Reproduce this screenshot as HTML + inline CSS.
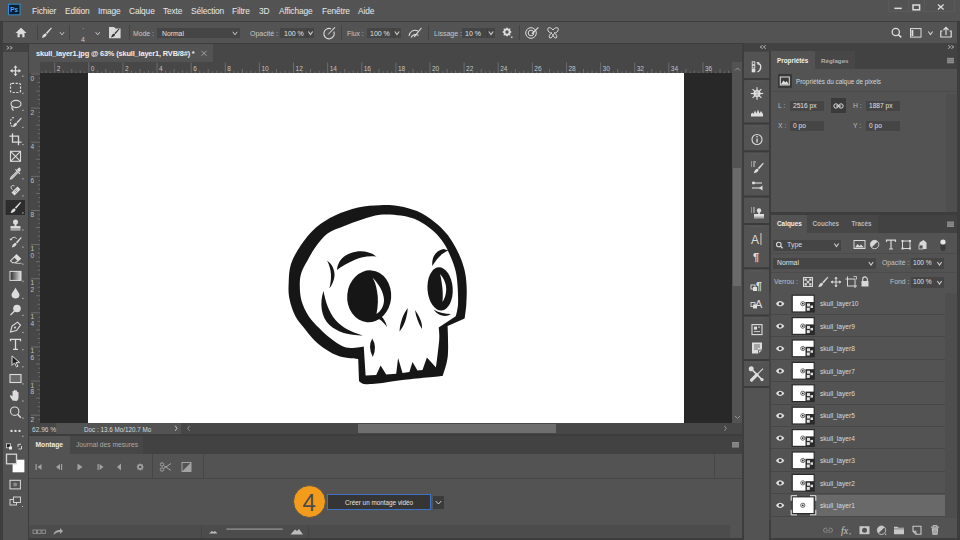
<!DOCTYPE html>
<html><head><meta charset="utf-8">
<style>
*{margin:0;padding:0;box-sizing:border-box}
html,body{width:960px;height:540px;overflow:hidden;background:#3d3d3d;font-family:"Liberation Sans",sans-serif;color:#d6d6d6}
.a{position:absolute}
.t{position:absolute;white-space:nowrap;font-size:8px;line-height:10px}
svg{position:absolute;left:0;top:0}
</style></head><body>
<div class="a" style="left:0px;top:0px;width:960px;height:21px;background:#535353;"></div>
<div class="a" style="left:3px;top:22px;width:954px;height:21px;background:#535353;"></div>
<div class="a" style="left:3px;top:44px;width:25px;height:8px;background:#424242;"></div>
<div class="a" style="left:3px;top:52px;width:25px;height:488px;background:#535353;"></div>
<div class="a" style="left:29px;top:44px;width:713px;height:18px;background:#474747;"></div>
<div class="a" style="left:29px;top:44px;width:184px;height:18px;background:#535353;"></div>
<div class="a" style="left:29px;top:62px;width:703px;height:11px;background:#474747;"></div>
<div class="a" style="left:29px;top:73px;width:11px;height:350px;background:#474747;"></div>
<div class="a" style="left:29px;top:62px;width:11px;height:11px;background:#535353;"></div>
<div class="a" style="left:40px;top:73px;width:692px;height:350px;background:#282828;"></div>
<div class="a" style="left:88px;top:73px;width:596px;height:350px;background:#ffffff;"></div>
<div class="a" style="left:732px;top:62px;width:10px;height:361px;background:#535353;"></div>
<div class="a" style="left:733px;top:168px;width:8px;height:118px;background:#6a6a6a;"></div>
<div class="a" style="left:29px;top:423px;width:713px;height:11px;background:#474747;"></div>
<div class="a" style="left:29px;top:423px;width:27px;height:11px;background:#474747;"></div>
<div class="a" style="left:56px;top:423px;width:125px;height:11px;background:#535353;"></div>
<div class="a" style="left:358px;top:424px;width:198px;height:9px;background:#6e6e6e;"></div>
<div class="a" style="left:29px;top:436px;width:713px;height:18px;background:#424242;"></div>
<div class="a" style="left:29px;top:436px;width:41px;height:18px;background:#535353;"></div>
<div class="a" style="left:70px;top:436px;width:73px;height:18px;background:#474747;"></div>
<div class="a" style="left:29px;top:454px;width:713px;height:84px;background:#535353;"></div>
<div class="a" style="left:744px;top:43px;width:213px;height:8px;background:#424242;"></div>
<div class="a" style="left:744px;top:51px;width:25px;height:489px;background:#4f4f4f;"></div>
<div class="a" style="left:771px;top:51px;width:186px;height:18px;background:#424242;"></div>
<div class="a" style="left:771px;top:51px;width:44px;height:18px;background:#535353;"></div>
<div class="a" style="left:815px;top:51px;width:40px;height:18px;background:#474747;"></div>
<div class="a" style="left:771px;top:69px;width:186px;height:143px;background:#535353;"></div>
<div class="a" style="left:771px;top:215px;width:186px;height:18px;background:#424242;"></div>
<div class="a" style="left:771px;top:215px;width:36px;height:18px;background:#535353;"></div>
<div class="a" style="left:807px;top:215px;width:38px;height:18px;background:#474747;"></div>
<div class="a" style="left:845px;top:215px;width:33px;height:18px;background:#474747;"></div>
<div class="a" style="left:771px;top:233px;width:186px;height:305px;background:#535353;"></div>
<div class="t" style="left:32px;top:6px;font-size:8.4px;color:#e8e8e8;letter-spacing:-0.15px">Fichier</div>
<div class="t" style="left:65px;top:6px;font-size:8.4px;color:#e8e8e8;letter-spacing:-0.15px">Edition</div>
<div class="t" style="left:98px;top:6px;font-size:8.4px;color:#e8e8e8;letter-spacing:-0.15px">Image</div>
<div class="t" style="left:129px;top:6px;font-size:8.4px;color:#e8e8e8;letter-spacing:-0.15px">Calque</div>
<div class="t" style="left:163px;top:6px;font-size:8.4px;color:#e8e8e8;letter-spacing:-0.15px">Texte</div>
<div class="t" style="left:191px;top:6px;font-size:8.4px;color:#e8e8e8;letter-spacing:-0.15px">Sélection</div>
<div class="t" style="left:232px;top:6px;font-size:8.4px;color:#e8e8e8;letter-spacing:-0.15px">Filtre</div>
<div class="t" style="left:259px;top:6px;font-size:8.4px;color:#e8e8e8;letter-spacing:-0.15px">3D</div>
<div class="t" style="left:279px;top:6px;font-size:8.4px;color:#e8e8e8;letter-spacing:-0.15px">Affichage</div>
<div class="t" style="left:322px;top:6px;font-size:8.4px;color:#e8e8e8;letter-spacing:-0.15px">Fenêtre</div>
<div class="t" style="left:358px;top:6px;font-size:8.4px;color:#e8e8e8;letter-spacing:-0.15px">Aide</div>
<div class="t" style="left:36px;top:48.7px;font-size:7.4px;color:#f0f0f0;font-weight:bold;letter-spacing:-0.15px">skull_layer1.jpg @ 63% (skull_layer1, RVB/8#) *</div>
<div class="a" style="left:37px;top:25px;width:1px;height:15px;background:#444444;"></div>
<div class="a" style="left:69px;top:25px;width:1px;height:15px;background:#444444;"></div>
<div class="a" style="left:128.5px;top:25px;width:1px;height:15px;background:#444444;"></div>
<div class="a" style="left:341px;top:25px;width:1px;height:15px;background:#444444;"></div>
<div class="a" style="left:428px;top:25px;width:1px;height:15px;background:#444444;"></div>
<div class="a" style="left:518.5px;top:25px;width:1px;height:15px;background:#444444;"></div>
<div class="t" style="left:133px;top:28.5px;font-size:6.8px;color:#c8c8c8;">Mode :</div>
<div class="a" style="left:157px;top:28px;width:83px;height:10px;background:#454545;"></div>
<div class="t" style="left:162px;top:28.5px;font-size:6.8px;color:#e0e0e0;">Normal</div>
<div class="t" style="left:250px;top:28.5px;font-size:7px;color:#c8c8c8;">Opacité :</div>
<div class="a" style="left:280px;top:28px;width:27px;height:10px;background:#454545;"></div>
<div class="a" style="left:307px;top:28px;width:7px;height:10px;background:#454545;"></div>
<div class="a" style="left:306.5px;top:28px;width:0.8px;height:10px;background:#3e3e3e;"></div>
<div class="t" style="left:284px;top:29px;font-size:7px;color:#e0e0e0;">100 %</div>
<div class="t" style="left:347px;top:28.5px;font-size:6.8px;color:#c8c8c8;">Flux :</div>
<div class="a" style="left:367px;top:28px;width:26px;height:10px;background:#454545;"></div>
<div class="a" style="left:393px;top:28px;width:8px;height:10px;background:#454545;"></div>
<div class="a" style="left:392.5px;top:28px;width:0.8px;height:10px;background:#3e3e3e;"></div>
<div class="t" style="left:370px;top:29px;font-size:7px;color:#e0e0e0;">100 %</div>
<div class="t" style="left:434px;top:28.5px;font-size:7px;color:#c8c8c8;">Lissage :</div>
<div class="a" style="left:462px;top:28px;width:25px;height:10px;background:#454545;"></div>
<div class="a" style="left:487px;top:28px;width:8px;height:10px;background:#454545;"></div>
<div class="a" style="left:486.5px;top:28px;width:0.8px;height:10px;background:#3e3e3e;"></div>
<div class="t" style="left:465px;top:29px;font-size:7px;color:#e0e0e0;">10 %</div>
<div class="t" style="left:82px;top:24px;font-size:7px;color:#c8c8c8;">·</div>
<div class="t" style="left:81px;top:35px;font-size:7px;color:#c8c8c8;">4</div>
<div class="a" style="left:888px;top:-1px;width:67px;height:13px;border:1px solid #5a5a5a"></div>
<div class="a" style="left:908px;top:0px;width:1px;height:12px;background:#5a5a5a;"></div>
<div class="a" style="left:924px;top:0px;width:1px;height:12px;background:#5a5a5a;"></div>
<div class="t" style="left:32px;top:425px;font-size:6.6px;color:#d0d0d0;">62.96 %</div>
<div class="t" style="left:84px;top:425px;font-size:6.3px;color:#d8d8d8;">Doc : 13.6 Mo/120.7 Mo</div>
<div class="t" style="left:35.5px;top:440px;font-size:6.7px;color:#eeeeee;font-weight:bold">Montage</div>
<div class="t" style="left:76px;top:440px;font-size:6.7px;color:#aaaaaa;">Journal des mesures</div>
<div class="a" style="left:29px;top:478px;width:713px;height:1px;background:#464646;"></div>
<div class="a" style="left:152px;top:454px;width:1px;height:24px;background:#464646;"></div>
<div class="a" style="left:203px;top:454px;width:1px;height:24px;background:#464646;"></div>
<div class="a" style="left:714px;top:454px;width:1px;height:24px;background:#464646;"></div>
<div class="a" style="left:29px;top:525px;width:701px;height:13px;background:#4c4c4c;"></div>
<div class="a" style="left:201px;top:525px;width:1px;height:13px;background:#444;"></div>
<div class="a" style="left:308px;top:525px;width:1px;height:13px;background:#444;"></div>
<div class="a" style="left:293px;top:484.5px;width:33px;height:33px;border-radius:50%;background:#f39c1c;border:1px solid #5e5547"></div>
<div class="t" style="left:302.5px;top:486.5px;font-size:24px;color:#4b4b4b;line-height:32px;font-weight:normal">4</div>
<div class="a" style="left:327px;top:494px;width:104px;height:16px;background:#353535;border:1px solid #3f72c4"></div>
<div class="t" style="left:345px;top:498px;font-size:6.35px;color:#e2e2e2;">Créer un montage vidéo</div>
<div class="a" style="left:433px;top:496px;width:11px;height:13px;background:#3b3b3b;"></div>
<div class="t" style="left:777px;top:56.3px;font-size:6.35px;color:#f0f0f0;font-weight:bold">Propriétés</div>
<div class="t" style="left:821px;top:56.3px;font-size:6.2px;color:#b0b0b0;font-weight:bold">Réglages</div>
<div class="a" style="left:771px;top:91px;width:186px;height:1px;background:#4a4a4a;"></div>
<div class="a" style="left:778px;top:74px;width:14px;height:14px;background:#393939;"></div>
<div class="t" style="left:796px;top:77px;font-size:6.35px;color:#d6d6d6;">Propriétés du calque de pixels</div>
<div class="a" style="left:946px;top:94px;width:11px;height:118px;background:#4e4e4e;"></div>
<div class="t" style="left:778px;top:101px;font-size:6.8px;color:#bbbbbb;">L :</div>
<div class="a" style="left:790px;top:101px;width:34px;height:10px;background:#454545;"></div>
<div class="t" style="left:793px;top:101px;font-size:6.6px;color:#e0e0e0;">2516 px</div>
<div class="a" style="left:831px;top:98px;width:15px;height:15px;background:#3a3a3a;"></div>
<div class="t" style="left:853px;top:101px;font-size:6.8px;color:#bbbbbb;">H :</div>
<div class="a" style="left:866px;top:101px;width:34px;height:10px;background:#454545;"></div>
<div class="t" style="left:869px;top:101px;font-size:6.6px;color:#e0e0e0;">1887 px</div>
<div class="t" style="left:778px;top:121px;font-size:6.8px;color:#bbbbbb;">X :</div>
<div class="a" style="left:790px;top:121px;width:34px;height:10px;background:#454545;"></div>
<div class="t" style="left:793px;top:121px;font-size:6.6px;color:#e0e0e0;">0 po</div>
<div class="t" style="left:853px;top:121px;font-size:6.8px;color:#bbbbbb;">Y :</div>
<div class="a" style="left:866px;top:121px;width:34px;height:10px;background:#454545;"></div>
<div class="t" style="left:869px;top:121px;font-size:6.6px;color:#e0e0e0;">0 po</div>
<div class="t" style="left:777px;top:219.4px;font-size:6.4px;color:#f0f0f0;font-weight:bold">Calques</div>
<div class="t" style="left:812.5px;top:219.4px;font-size:6.3px;color:#b8b8b8;font-weight:bold">Couches</div>
<div class="t" style="left:851.5px;top:219.4px;font-size:6.3px;color:#b8b8b8;font-weight:bold">Tracés</div>
<div class="a" style="left:773px;top:240px;width:68px;height:11px;background:#454545;"></div>
<div class="t" style="left:787px;top:240px;font-size:7px;color:#d8d8d8;">Type</div>
<div class="a" style="left:771px;top:253px;width:186px;height:1px;background:#4b4b4b;"></div>
<div class="a" style="left:773px;top:258px;width:103px;height:11px;background:#454545;"></div>
<div class="t" style="left:777px;top:258px;font-size:6.8px;color:#e0e0e0;">Normal</div>
<div class="t" style="left:882px;top:258px;font-size:6.8px;color:#c0c0c0;">Opacité :</div>
<div class="a" style="left:911px;top:258px;width:24px;height:11px;background:#454545;"></div>
<div class="a" style="left:935px;top:258px;width:9px;height:11px;background:#454545;"></div>
<div class="t" style="left:913px;top:258px;font-size:6.6px;color:#e0e0e0;">100 %</div>
<div class="a" style="left:771px;top:272px;width:186px;height:1px;background:#4b4b4b;"></div>
<div class="t" style="left:774px;top:277px;font-size:6.8px;color:#c0c0c0;">Verrou :</div>
<div class="t" style="left:890px;top:277px;font-size:6.8px;color:#c0c0c0;">Fond :</div>
<div class="a" style="left:911px;top:277px;width:24px;height:11px;background:#454545;"></div>
<div class="a" style="left:935px;top:277px;width:9px;height:11px;background:#454545;"></div>
<div class="t" style="left:913px;top:277px;font-size:6.6px;color:#e0e0e0;">100 %</div>
<div class="a" style="left:769px;top:292px;width:2px;height:228px;background:#444;"></div>
<div class="a" style="left:945px;top:293px;width:12px;height:225px;background:#4e4e4e;"></div>
<div class="a" style="left:771px;top:313.9px;width:174px;height:1px;background:#474747;"></div>
<div class="t" style="left:820px;top:299.3px;font-size:6.6px;color:#dadada;">skull_layer10</div>
<div class="a" style="left:771px;top:336.3px;width:174px;height:1px;background:#474747;"></div>
<div class="t" style="left:820px;top:321.7px;font-size:6.6px;color:#dadada;">skull_layer9</div>
<div class="a" style="left:771px;top:358.7px;width:174px;height:1px;background:#474747;"></div>
<div class="t" style="left:820px;top:344.1px;font-size:6.6px;color:#dadada;">skull_layer8</div>
<div class="a" style="left:771px;top:381.1px;width:174px;height:1px;background:#474747;"></div>
<div class="t" style="left:820px;top:366.5px;font-size:6.6px;color:#dadada;">skull_layer7</div>
<div class="a" style="left:771px;top:403.5px;width:174px;height:1px;background:#474747;"></div>
<div class="t" style="left:820px;top:388.9px;font-size:6.6px;color:#dadada;">skull_layer6</div>
<div class="a" style="left:771px;top:425.9px;width:174px;height:1px;background:#474747;"></div>
<div class="t" style="left:820px;top:411.3px;font-size:6.6px;color:#dadada;">skull_layer5</div>
<div class="a" style="left:771px;top:448.3px;width:174px;height:1px;background:#474747;"></div>
<div class="t" style="left:820px;top:433.7px;font-size:6.6px;color:#dadada;">skull_layer4</div>
<div class="a" style="left:771px;top:470.7px;width:174px;height:1px;background:#474747;"></div>
<div class="t" style="left:820px;top:456.1px;font-size:6.6px;color:#dadada;">skull_layer3</div>
<div class="a" style="left:771px;top:493.1px;width:174px;height:1px;background:#474747;"></div>
<div class="t" style="left:820px;top:478.5px;font-size:6.6px;color:#dadada;">skull_layer2</div>
<div class="a" style="left:816px;top:494.6px;width:129px;height:21.4px;background:#696969;"></div>
<div class="a" style="left:771px;top:515.5px;width:174px;height:1px;background:#474747;"></div>
<div class="t" style="left:820px;top:500.9px;font-size:6.6px;color:#dadada;">skull_layer1</div>
<svg width="960" height="540" style="left:0;top:0"><rect x="41.38" y="71.50" width="1" height="1.5" fill="#6c6c6c"/><rect x="45.65" y="70.50" width="1" height="2.5" fill="#6c6c6c"/><rect x="49.91" y="71.50" width="1" height="1.5" fill="#6c6c6c"/><rect x="54.18" y="62.50" width="1" height="10.5" fill="#6c6c6c"/><text x="56.68" y="70.5" font-size="6.5" fill="#c4c4c4" font-family="Liberation Sans">2</text><rect x="58.45" y="71.50" width="1" height="1.5" fill="#6c6c6c"/><rect x="62.71" y="70.50" width="1" height="2.5" fill="#6c6c6c"/><rect x="66.97" y="71.50" width="1" height="1.5" fill="#6c6c6c"/><rect x="71.24" y="69.00" width="1" height="4" fill="#6c6c6c"/><rect x="75.50" y="71.50" width="1" height="1.5" fill="#6c6c6c"/><rect x="79.77" y="70.50" width="1" height="2.5" fill="#6c6c6c"/><rect x="84.03" y="71.50" width="1" height="1.5" fill="#6c6c6c"/><rect x="88.30" y="62.50" width="1" height="10.5" fill="#6c6c6c"/><text x="90.80" y="70.5" font-size="6.5" fill="#c4c4c4" font-family="Liberation Sans">0</text><rect x="92.56" y="71.50" width="1" height="1.5" fill="#6c6c6c"/><rect x="96.83" y="70.50" width="1" height="2.5" fill="#6c6c6c"/><rect x="101.09" y="71.50" width="1" height="1.5" fill="#6c6c6c"/><rect x="105.36" y="69.00" width="1" height="4" fill="#6c6c6c"/><rect x="109.62" y="71.50" width="1" height="1.5" fill="#6c6c6c"/><rect x="113.89" y="70.50" width="1" height="2.5" fill="#6c6c6c"/><rect x="118.16" y="71.50" width="1" height="1.5" fill="#6c6c6c"/><rect x="122.42" y="62.50" width="1" height="10.5" fill="#6c6c6c"/><text x="124.92" y="70.5" font-size="6.5" fill="#c4c4c4" font-family="Liberation Sans">2</text><rect x="126.69" y="71.50" width="1" height="1.5" fill="#6c6c6c"/><rect x="130.95" y="70.50" width="1" height="2.5" fill="#6c6c6c"/><rect x="135.22" y="71.50" width="1" height="1.5" fill="#6c6c6c"/><rect x="139.48" y="69.00" width="1" height="4" fill="#6c6c6c"/><rect x="143.75" y="71.50" width="1" height="1.5" fill="#6c6c6c"/><rect x="148.01" y="70.50" width="1" height="2.5" fill="#6c6c6c"/><rect x="152.27" y="71.50" width="1" height="1.5" fill="#6c6c6c"/><rect x="156.54" y="62.50" width="1" height="10.5" fill="#6c6c6c"/><text x="159.04" y="70.5" font-size="6.5" fill="#c4c4c4" font-family="Liberation Sans">4</text><rect x="160.81" y="71.50" width="1" height="1.5" fill="#6c6c6c"/><rect x="165.07" y="70.50" width="1" height="2.5" fill="#6c6c6c"/><rect x="169.33" y="71.50" width="1" height="1.5" fill="#6c6c6c"/><rect x="173.60" y="69.00" width="1" height="4" fill="#6c6c6c"/><rect x="177.87" y="71.50" width="1" height="1.5" fill="#6c6c6c"/><rect x="182.13" y="70.50" width="1" height="2.5" fill="#6c6c6c"/><rect x="186.39" y="71.50" width="1" height="1.5" fill="#6c6c6c"/><rect x="190.66" y="62.50" width="1" height="10.5" fill="#6c6c6c"/><text x="193.16" y="70.5" font-size="6.5" fill="#c4c4c4" font-family="Liberation Sans">6</text><rect x="194.92" y="71.50" width="1" height="1.5" fill="#6c6c6c"/><rect x="199.19" y="70.50" width="1" height="2.5" fill="#6c6c6c"/><rect x="203.45" y="71.50" width="1" height="1.5" fill="#6c6c6c"/><rect x="207.72" y="69.00" width="1" height="4" fill="#6c6c6c"/><rect x="211.98" y="71.50" width="1" height="1.5" fill="#6c6c6c"/><rect x="216.25" y="70.50" width="1" height="2.5" fill="#6c6c6c"/><rect x="220.51" y="71.50" width="1" height="1.5" fill="#6c6c6c"/><rect x="224.78" y="62.50" width="1" height="10.5" fill="#6c6c6c"/><text x="227.28" y="70.5" font-size="6.5" fill="#c4c4c4" font-family="Liberation Sans">8</text><rect x="229.04" y="71.50" width="1" height="1.5" fill="#6c6c6c"/><rect x="233.31" y="70.50" width="1" height="2.5" fill="#6c6c6c"/><rect x="237.57" y="71.50" width="1" height="1.5" fill="#6c6c6c"/><rect x="241.84" y="69.00" width="1" height="4" fill="#6c6c6c"/><rect x="246.10" y="71.50" width="1" height="1.5" fill="#6c6c6c"/><rect x="250.37" y="70.50" width="1" height="2.5" fill="#6c6c6c"/><rect x="254.63" y="71.50" width="1" height="1.5" fill="#6c6c6c"/><rect x="258.90" y="62.50" width="1" height="10.5" fill="#6c6c6c"/><text x="261.40" y="70.5" font-size="6.5" fill="#c4c4c4" font-family="Liberation Sans">10</text><rect x="263.16" y="71.50" width="1" height="1.5" fill="#6c6c6c"/><rect x="267.43" y="70.50" width="1" height="2.5" fill="#6c6c6c"/><rect x="271.69" y="71.50" width="1" height="1.5" fill="#6c6c6c"/><rect x="275.96" y="69.00" width="1" height="4" fill="#6c6c6c"/><rect x="280.22" y="71.50" width="1" height="1.5" fill="#6c6c6c"/><rect x="284.49" y="70.50" width="1" height="2.5" fill="#6c6c6c"/><rect x="288.75" y="71.50" width="1" height="1.5" fill="#6c6c6c"/><rect x="293.02" y="62.50" width="1" height="10.5" fill="#6c6c6c"/><text x="295.52" y="70.5" font-size="6.5" fill="#c4c4c4" font-family="Liberation Sans">12</text><rect x="297.28" y="71.50" width="1" height="1.5" fill="#6c6c6c"/><rect x="301.55" y="70.50" width="1" height="2.5" fill="#6c6c6c"/><rect x="305.81" y="71.50" width="1" height="1.5" fill="#6c6c6c"/><rect x="310.08" y="69.00" width="1" height="4" fill="#6c6c6c"/><rect x="314.34" y="71.50" width="1" height="1.5" fill="#6c6c6c"/><rect x="318.61" y="70.50" width="1" height="2.5" fill="#6c6c6c"/><rect x="322.88" y="71.50" width="1" height="1.5" fill="#6c6c6c"/><rect x="327.14" y="62.50" width="1" height="10.5" fill="#6c6c6c"/><text x="329.64" y="70.5" font-size="6.5" fill="#c4c4c4" font-family="Liberation Sans">14</text><rect x="331.40" y="71.50" width="1" height="1.5" fill="#6c6c6c"/><rect x="335.67" y="70.50" width="1" height="2.5" fill="#6c6c6c"/><rect x="339.94" y="71.50" width="1" height="1.5" fill="#6c6c6c"/><rect x="344.20" y="69.00" width="1" height="4" fill="#6c6c6c"/><rect x="348.46" y="71.50" width="1" height="1.5" fill="#6c6c6c"/><rect x="352.73" y="70.50" width="1" height="2.5" fill="#6c6c6c"/><rect x="357.00" y="71.50" width="1" height="1.5" fill="#6c6c6c"/><rect x="361.26" y="62.50" width="1" height="10.5" fill="#6c6c6c"/><text x="363.76" y="70.5" font-size="6.5" fill="#c4c4c4" font-family="Liberation Sans">16</text><rect x="365.52" y="71.50" width="1" height="1.5" fill="#6c6c6c"/><rect x="369.79" y="70.50" width="1" height="2.5" fill="#6c6c6c"/><rect x="374.06" y="71.50" width="1" height="1.5" fill="#6c6c6c"/><rect x="378.32" y="69.00" width="1" height="4" fill="#6c6c6c"/><rect x="382.58" y="71.50" width="1" height="1.5" fill="#6c6c6c"/><rect x="386.85" y="70.50" width="1" height="2.5" fill="#6c6c6c"/><rect x="391.12" y="71.50" width="1" height="1.5" fill="#6c6c6c"/><rect x="395.38" y="62.50" width="1" height="10.5" fill="#6c6c6c"/><text x="397.88" y="70.5" font-size="6.5" fill="#c4c4c4" font-family="Liberation Sans">18</text><rect x="399.64" y="71.50" width="1" height="1.5" fill="#6c6c6c"/><rect x="403.91" y="70.50" width="1" height="2.5" fill="#6c6c6c"/><rect x="408.18" y="71.50" width="1" height="1.5" fill="#6c6c6c"/><rect x="412.44" y="69.00" width="1" height="4" fill="#6c6c6c"/><rect x="416.70" y="71.50" width="1" height="1.5" fill="#6c6c6c"/><rect x="420.97" y="70.50" width="1" height="2.5" fill="#6c6c6c"/><rect x="425.24" y="71.50" width="1" height="1.5" fill="#6c6c6c"/><rect x="429.50" y="62.50" width="1" height="10.5" fill="#6c6c6c"/><text x="432.00" y="70.5" font-size="6.5" fill="#c4c4c4" font-family="Liberation Sans">20</text><rect x="433.76" y="71.50" width="1" height="1.5" fill="#6c6c6c"/><rect x="438.03" y="70.50" width="1" height="2.5" fill="#6c6c6c"/><rect x="442.29" y="71.50" width="1" height="1.5" fill="#6c6c6c"/><rect x="446.56" y="69.00" width="1" height="4" fill="#6c6c6c"/><rect x="450.82" y="71.50" width="1" height="1.5" fill="#6c6c6c"/><rect x="455.09" y="70.50" width="1" height="2.5" fill="#6c6c6c"/><rect x="459.35" y="71.50" width="1" height="1.5" fill="#6c6c6c"/><rect x="463.62" y="62.50" width="1" height="10.5" fill="#6c6c6c"/><text x="466.12" y="70.5" font-size="6.5" fill="#c4c4c4" font-family="Liberation Sans">22</text><rect x="467.88" y="71.50" width="1" height="1.5" fill="#6c6c6c"/><rect x="472.15" y="70.50" width="1" height="2.5" fill="#6c6c6c"/><rect x="476.41" y="71.50" width="1" height="1.5" fill="#6c6c6c"/><rect x="480.68" y="69.00" width="1" height="4" fill="#6c6c6c"/><rect x="484.94" y="71.50" width="1" height="1.5" fill="#6c6c6c"/><rect x="489.21" y="70.50" width="1" height="2.5" fill="#6c6c6c"/><rect x="493.47" y="71.50" width="1" height="1.5" fill="#6c6c6c"/><rect x="497.74" y="62.50" width="1" height="10.5" fill="#6c6c6c"/><text x="500.24" y="70.5" font-size="6.5" fill="#c4c4c4" font-family="Liberation Sans">24</text><rect x="502.00" y="71.50" width="1" height="1.5" fill="#6c6c6c"/><rect x="506.27" y="70.50" width="1" height="2.5" fill="#6c6c6c"/><rect x="510.53" y="71.50" width="1" height="1.5" fill="#6c6c6c"/><rect x="514.80" y="69.00" width="1" height="4" fill="#6c6c6c"/><rect x="519.06" y="71.50" width="1" height="1.5" fill="#6c6c6c"/><rect x="523.33" y="70.50" width="1" height="2.5" fill="#6c6c6c"/><rect x="527.59" y="71.50" width="1" height="1.5" fill="#6c6c6c"/><rect x="531.86" y="62.50" width="1" height="10.5" fill="#6c6c6c"/><text x="534.36" y="70.5" font-size="6.5" fill="#c4c4c4" font-family="Liberation Sans">26</text><rect x="536.12" y="71.50" width="1" height="1.5" fill="#6c6c6c"/><rect x="540.39" y="70.50" width="1" height="2.5" fill="#6c6c6c"/><rect x="544.65" y="71.50" width="1" height="1.5" fill="#6c6c6c"/><rect x="548.92" y="69.00" width="1" height="4" fill="#6c6c6c"/><rect x="553.18" y="71.50" width="1" height="1.5" fill="#6c6c6c"/><rect x="557.45" y="70.50" width="1" height="2.5" fill="#6c6c6c"/><rect x="561.71" y="71.50" width="1" height="1.5" fill="#6c6c6c"/><rect x="565.98" y="62.50" width="1" height="10.5" fill="#6c6c6c"/><text x="568.48" y="70.5" font-size="6.5" fill="#c4c4c4" font-family="Liberation Sans">28</text><rect x="570.24" y="71.50" width="1" height="1.5" fill="#6c6c6c"/><rect x="574.51" y="70.50" width="1" height="2.5" fill="#6c6c6c"/><rect x="578.77" y="71.50" width="1" height="1.5" fill="#6c6c6c"/><rect x="583.04" y="69.00" width="1" height="4" fill="#6c6c6c"/><rect x="587.30" y="71.50" width="1" height="1.5" fill="#6c6c6c"/><rect x="591.57" y="70.50" width="1" height="2.5" fill="#6c6c6c"/><rect x="595.83" y="71.50" width="1" height="1.5" fill="#6c6c6c"/><rect x="600.10" y="62.50" width="1" height="10.5" fill="#6c6c6c"/><text x="602.60" y="70.5" font-size="6.5" fill="#c4c4c4" font-family="Liberation Sans">30</text><rect x="604.36" y="71.50" width="1" height="1.5" fill="#6c6c6c"/><rect x="608.63" y="70.50" width="1" height="2.5" fill="#6c6c6c"/><rect x="612.89" y="71.50" width="1" height="1.5" fill="#6c6c6c"/><rect x="617.16" y="69.00" width="1" height="4" fill="#6c6c6c"/><rect x="621.42" y="71.50" width="1" height="1.5" fill="#6c6c6c"/><rect x="625.69" y="70.50" width="1" height="2.5" fill="#6c6c6c"/><rect x="629.95" y="71.50" width="1" height="1.5" fill="#6c6c6c"/><rect x="634.22" y="62.50" width="1" height="10.5" fill="#6c6c6c"/><text x="636.72" y="70.5" font-size="6.5" fill="#c4c4c4" font-family="Liberation Sans">32</text><rect x="638.48" y="71.50" width="1" height="1.5" fill="#6c6c6c"/><rect x="642.75" y="70.50" width="1" height="2.5" fill="#6c6c6c"/><rect x="647.01" y="71.50" width="1" height="1.5" fill="#6c6c6c"/><rect x="651.28" y="69.00" width="1" height="4" fill="#6c6c6c"/><rect x="655.54" y="71.50" width="1" height="1.5" fill="#6c6c6c"/><rect x="659.81" y="70.50" width="1" height="2.5" fill="#6c6c6c"/><rect x="664.07" y="71.50" width="1" height="1.5" fill="#6c6c6c"/><rect x="668.34" y="62.50" width="1" height="10.5" fill="#6c6c6c"/><text x="670.84" y="70.5" font-size="6.5" fill="#c4c4c4" font-family="Liberation Sans">34</text><rect x="672.60" y="71.50" width="1" height="1.5" fill="#6c6c6c"/><rect x="676.87" y="70.50" width="1" height="2.5" fill="#6c6c6c"/><rect x="681.13" y="71.50" width="1" height="1.5" fill="#6c6c6c"/><rect x="685.40" y="69.00" width="1" height="4" fill="#6c6c6c"/><rect x="689.66" y="71.50" width="1" height="1.5" fill="#6c6c6c"/><rect x="693.93" y="70.50" width="1" height="2.5" fill="#6c6c6c"/><rect x="698.19" y="71.50" width="1" height="1.5" fill="#6c6c6c"/><rect x="702.46" y="62.50" width="1" height="10.5" fill="#6c6c6c"/><text x="704.96" y="70.5" font-size="6.5" fill="#c4c4c4" font-family="Liberation Sans">36</text><rect x="706.72" y="71.50" width="1" height="1.5" fill="#6c6c6c"/><rect x="710.99" y="70.50" width="1" height="2.5" fill="#6c6c6c"/><rect x="715.25" y="71.50" width="1" height="1.5" fill="#6c6c6c"/><rect x="719.52" y="69.00" width="1" height="4" fill="#6c6c6c"/><rect x="723.78" y="71.50" width="1" height="1.5" fill="#6c6c6c"/><rect x="728.05" y="70.50" width="1" height="2.5" fill="#6c6c6c"/><rect x="31.00" y="73.50" width="9" height="1" fill="#6c6c6c"/><text x="30.5" y="80.50" font-size="6.5" fill="#c0c0c0" font-family="Liberation Sans">0</text><rect x="38.50" y="77.77" width="1.5" height="1" fill="#6c6c6c"/><rect x="37.50" y="82.03" width="2.5" height="1" fill="#6c6c6c"/><rect x="38.50" y="86.30" width="1.5" height="1" fill="#6c6c6c"/><rect x="36.00" y="90.56" width="4" height="1" fill="#6c6c6c"/><rect x="38.50" y="94.83" width="1.5" height="1" fill="#6c6c6c"/><rect x="37.50" y="99.09" width="2.5" height="1" fill="#6c6c6c"/><rect x="38.50" y="103.35" width="1.5" height="1" fill="#6c6c6c"/><rect x="31.00" y="107.62" width="9" height="1" fill="#6c6c6c"/><text x="30.5" y="114.62" font-size="6.5" fill="#c0c0c0" font-family="Liberation Sans">2</text><rect x="38.50" y="111.88" width="1.5" height="1" fill="#6c6c6c"/><rect x="37.50" y="116.15" width="2.5" height="1" fill="#6c6c6c"/><rect x="38.50" y="120.41" width="1.5" height="1" fill="#6c6c6c"/><rect x="36.00" y="124.68" width="4" height="1" fill="#6c6c6c"/><rect x="38.50" y="128.94" width="1.5" height="1" fill="#6c6c6c"/><rect x="37.50" y="133.21" width="2.5" height="1" fill="#6c6c6c"/><rect x="38.50" y="137.47" width="1.5" height="1" fill="#6c6c6c"/><rect x="31.00" y="141.74" width="9" height="1" fill="#6c6c6c"/><text x="30.5" y="148.74" font-size="6.5" fill="#c0c0c0" font-family="Liberation Sans">4</text><rect x="38.50" y="146.00" width="1.5" height="1" fill="#6c6c6c"/><rect x="37.50" y="150.27" width="2.5" height="1" fill="#6c6c6c"/><rect x="38.50" y="154.53" width="1.5" height="1" fill="#6c6c6c"/><rect x="36.00" y="158.80" width="4" height="1" fill="#6c6c6c"/><rect x="38.50" y="163.06" width="1.5" height="1" fill="#6c6c6c"/><rect x="37.50" y="167.33" width="2.5" height="1" fill="#6c6c6c"/><rect x="38.50" y="171.59" width="1.5" height="1" fill="#6c6c6c"/><rect x="31.00" y="175.86" width="9" height="1" fill="#6c6c6c"/><text x="30.5" y="182.86" font-size="6.5" fill="#c0c0c0" font-family="Liberation Sans">6</text><rect x="38.50" y="180.12" width="1.5" height="1" fill="#6c6c6c"/><rect x="37.50" y="184.39" width="2.5" height="1" fill="#6c6c6c"/><rect x="38.50" y="188.65" width="1.5" height="1" fill="#6c6c6c"/><rect x="36.00" y="192.92" width="4" height="1" fill="#6c6c6c"/><rect x="38.50" y="197.19" width="1.5" height="1" fill="#6c6c6c"/><rect x="37.50" y="201.45" width="2.5" height="1" fill="#6c6c6c"/><rect x="38.50" y="205.72" width="1.5" height="1" fill="#6c6c6c"/><rect x="31.00" y="209.98" width="9" height="1" fill="#6c6c6c"/><text x="30.5" y="216.98" font-size="6.5" fill="#c0c0c0" font-family="Liberation Sans">8</text><rect x="38.50" y="214.24" width="1.5" height="1" fill="#6c6c6c"/><rect x="37.50" y="218.51" width="2.5" height="1" fill="#6c6c6c"/><rect x="38.50" y="222.77" width="1.5" height="1" fill="#6c6c6c"/><rect x="36.00" y="227.04" width="4" height="1" fill="#6c6c6c"/><rect x="38.50" y="231.30" width="1.5" height="1" fill="#6c6c6c"/><rect x="37.50" y="235.57" width="2.5" height="1" fill="#6c6c6c"/><rect x="38.50" y="239.83" width="1.5" height="1" fill="#6c6c6c"/><rect x="31.00" y="244.10" width="9" height="1" fill="#6c6c6c"/><text x="30.5" y="251.10" font-size="6.5" fill="#c0c0c0" font-family="Liberation Sans">1</text><text x="30.5" y="257.60" font-size="6.5" fill="#c0c0c0" font-family="Liberation Sans">0</text><rect x="38.50" y="248.36" width="1.5" height="1" fill="#6c6c6c"/><rect x="37.50" y="252.63" width="2.5" height="1" fill="#6c6c6c"/><rect x="38.50" y="256.89" width="1.5" height="1" fill="#6c6c6c"/><rect x="36.00" y="261.16" width="4" height="1" fill="#6c6c6c"/><rect x="38.50" y="265.42" width="1.5" height="1" fill="#6c6c6c"/><rect x="37.50" y="269.69" width="2.5" height="1" fill="#6c6c6c"/><rect x="38.50" y="273.95" width="1.5" height="1" fill="#6c6c6c"/><rect x="31.00" y="278.22" width="9" height="1" fill="#6c6c6c"/><text x="30.5" y="285.22" font-size="6.5" fill="#c0c0c0" font-family="Liberation Sans">1</text><text x="30.5" y="291.72" font-size="6.5" fill="#c0c0c0" font-family="Liberation Sans">2</text><rect x="38.50" y="282.49" width="1.5" height="1" fill="#6c6c6c"/><rect x="37.50" y="286.75" width="2.5" height="1" fill="#6c6c6c"/><rect x="38.50" y="291.01" width="1.5" height="1" fill="#6c6c6c"/><rect x="36.00" y="295.28" width="4" height="1" fill="#6c6c6c"/><rect x="38.50" y="299.54" width="1.5" height="1" fill="#6c6c6c"/><rect x="37.50" y="303.81" width="2.5" height="1" fill="#6c6c6c"/><rect x="38.50" y="308.07" width="1.5" height="1" fill="#6c6c6c"/><rect x="31.00" y="312.34" width="9" height="1" fill="#6c6c6c"/><text x="30.5" y="319.34" font-size="6.5" fill="#c0c0c0" font-family="Liberation Sans">1</text><text x="30.5" y="325.84" font-size="6.5" fill="#c0c0c0" font-family="Liberation Sans">4</text><rect x="38.50" y="316.61" width="1.5" height="1" fill="#6c6c6c"/><rect x="37.50" y="320.87" width="2.5" height="1" fill="#6c6c6c"/><rect x="38.50" y="325.13" width="1.5" height="1" fill="#6c6c6c"/><rect x="36.00" y="329.40" width="4" height="1" fill="#6c6c6c"/><rect x="38.50" y="333.66" width="1.5" height="1" fill="#6c6c6c"/><rect x="37.50" y="337.93" width="2.5" height="1" fill="#6c6c6c"/><rect x="38.50" y="342.19" width="1.5" height="1" fill="#6c6c6c"/><rect x="31.00" y="346.46" width="9" height="1" fill="#6c6c6c"/><text x="30.5" y="353.46" font-size="6.5" fill="#c0c0c0" font-family="Liberation Sans">1</text><text x="30.5" y="359.96" font-size="6.5" fill="#c0c0c0" font-family="Liberation Sans">6</text><rect x="38.50" y="350.72" width="1.5" height="1" fill="#6c6c6c"/><rect x="37.50" y="354.99" width="2.5" height="1" fill="#6c6c6c"/><rect x="38.50" y="359.25" width="1.5" height="1" fill="#6c6c6c"/><rect x="36.00" y="363.52" width="4" height="1" fill="#6c6c6c"/><rect x="38.50" y="367.78" width="1.5" height="1" fill="#6c6c6c"/><rect x="37.50" y="372.05" width="2.5" height="1" fill="#6c6c6c"/><rect x="38.50" y="376.31" width="1.5" height="1" fill="#6c6c6c"/><rect x="31.00" y="380.58" width="9" height="1" fill="#6c6c6c"/><text x="30.5" y="387.58" font-size="6.5" fill="#c0c0c0" font-family="Liberation Sans">1</text><text x="30.5" y="394.08" font-size="6.5" fill="#c0c0c0" font-family="Liberation Sans">8</text><rect x="38.50" y="384.84" width="1.5" height="1" fill="#6c6c6c"/><rect x="37.50" y="389.11" width="2.5" height="1" fill="#6c6c6c"/><rect x="38.50" y="393.38" width="1.5" height="1" fill="#6c6c6c"/><rect x="36.00" y="397.64" width="4" height="1" fill="#6c6c6c"/><rect x="38.50" y="401.90" width="1.5" height="1" fill="#6c6c6c"/><rect x="37.50" y="406.17" width="2.5" height="1" fill="#6c6c6c"/><rect x="38.50" y="410.44" width="1.5" height="1" fill="#6c6c6c"/><rect x="31.00" y="414.70" width="9" height="1" fill="#6c6c6c"/><text x="30.5" y="421.70" font-size="6.5" fill="#c0c0c0" font-family="Liberation Sans">2</text><rect x="38.50" y="418.96" width="1.5" height="1" fill="#6c6c6c"/></svg>
<svg width="960" height="540" style="left:0;top:0">
<path fill="#161616" d="M380.00,205.20 C386.63,204.93 391.63,204.92 397.80,205.90 C403.97,206.88 410.83,208.38 417.00,211.10 C423.17,213.82 429.62,218.12 434.80,222.20 C439.98,226.28 444.15,230.42 448.10,235.60 C452.05,240.78 455.78,247.63 458.50,253.30 C461.22,258.97 463.05,264.15 464.40,269.60 C465.75,275.05 466.28,280.20 466.60,286.00 C466.92,291.80 466.63,298.98 466.30,304.40 C465.97,309.82 464.60,318.50 464.60,318.50 L447.60,326.00 C447.60,326.00 448.63,347.67 447.80,356.00 C446.97,364.33 442.60,376.00 442.60,376.00 C442.60,376.00 413.35,378.73 402.50,380.00 C391.65,381.27 383.92,382.93 377.50,383.60 C371.08,384.27 367.08,384.43 364.00,384.00 C360.92,383.57 359.00,381.00 359.00,381.00 L358.20,359.00 C358.20,359.00 345.37,358.08 340.00,356.50 C334.63,354.92 330.23,352.17 326.00,349.50 C321.77,346.83 317.98,343.75 314.60,340.50 C311.22,337.25 308.90,334.03 305.70,330.00 C302.50,325.97 298.12,321.55 295.40,316.30 C292.68,311.05 290.52,304.18 289.40,298.50 C288.28,292.82 288.43,287.95 288.70,282.20 C288.97,276.45 288.95,270.20 291.00,264.00 C293.05,257.80 296.83,251.08 301.00,245.00 C305.17,238.92 310.33,232.42 316.00,227.50 C321.67,222.58 328.00,218.83 335.00,215.50 C342.00,212.17 350.50,209.22 358.00,207.50 C365.50,205.78 373.37,205.47 380.00,205.20 Z"/>
<path fill="#ffffff" d="M380.00,214.80 C386.45,214.15 394.28,214.62 400.70,215.60 C407.12,216.58 413.07,218.12 418.50,220.70 C423.93,223.28 429.10,227.38 433.30,231.10 C437.50,234.82 440.73,238.55 443.70,243.00 C446.67,247.45 449.12,253.12 451.10,257.80 C453.08,262.48 454.53,266.57 455.60,271.10 C456.67,275.63 457.10,279.45 457.50,285.00 C457.90,290.55 458.30,299.18 458.00,304.40 C457.70,309.62 455.70,316.30 455.70,316.30 L438.70,327.40 C438.70,327.40 439.65,333.32 439.20,340.00 C438.75,346.68 436.00,367.50 436.00,367.50 L426.90,357.50 L422.50,370.00 L417.50,370.50 L412.50,361.90 L409.40,372.00 L402.50,373.10 L398.10,358.10 L396.20,373.80 L386.20,374.40 L380.60,365.60 L376.20,375.00 L365.60,375.60 L363.75,346.50 C363.75,346.50 351.73,349.00 346.00,347.50 C340.27,346.00 333.88,340.73 329.40,337.50 C324.92,334.27 322.55,331.63 319.10,328.10 C315.65,324.57 311.67,320.98 308.70,316.30 C305.73,311.62 302.78,305.68 301.30,300.00 C299.82,294.32 299.68,287.03 299.80,282.20 C299.92,277.37 300.72,274.62 302.00,271.00 C303.28,267.38 305.25,264.50 307.50,260.50 C309.75,256.50 312.17,251.50 315.50,247.00 C318.83,242.50 322.70,237.00 327.50,233.50 C332.30,230.00 338.55,228.33 344.30,226.00 C350.05,223.67 356.05,221.37 362.00,219.50 C367.95,217.63 373.55,215.45 380.00,214.80 Z"/>
<g fill="#161616">
<ellipse cx="369.2" cy="296.3" rx="22" ry="26" transform="rotate(5 369.2 296.3)"/>
<path d="M381,316 C384,319 386,322.5 387,327 C384.5,323.5 382,321 379,319 Z"/>
<ellipse cx="440.1" cy="288.9" rx="12.6" ry="21.6" transform="rotate(-4 440.1 288.9)"/>
<path d="M337,270 C337.5,262 342.5,256 351,253 C360,250 369,251 376.5,256.5 C368.5,255.5 361,256.8 355,259.8 C347.5,263 341.5,266.5 337,270 Z"/>
<path d="M327,260.5 C332,264 335,270 334.5,276 C334,281 332,285 329.4,288.5 C331,282 331.5,276 330.5,270.5 C329.8,266.5 328.7,263.5 327,260.5 Z"/>
<path d="M323.5,291 C319.5,303 321,317 329.5,325 C337,332 349,335.5 363,335.5 C350,331.5 341.5,327 335.5,320 C329,312 325.5,302 323.5,291 Z"/>
<path d="M432.3,266 C431.5,257 435.5,251 443.5,249 L448.5,250.5 C441,253.5 437,258.5 432.3,266 Z"/>
<path d="M433.5,309.5 C439.5,313 445,314 451,314 C446,317.5 439,316.5 433.5,309.5 Z"/>
<path d="M407.8,308 C407,318 404,326 399.5,331.5 C400,323 403,314 407.8,308 Z"/>
<path d="M415,310 C419,316 422.5,322 422,329 C418.5,323.5 416,317 415,310 Z"/>
<path d="M372.2,338.5 Q377.5,347 372.8,357 Q367.5,347 372.2,338.5 Z"/>
</g>
<g fill="#ffffff">
<path d="M372.5,277.5 C378,283 384,292 384,300 C384,306 381,311 376.5,314 C378,306 378.5,298 377,291 C376,285 374.5,281 372.5,277.5 Z"/>
<path d="M440,274 C444,278.5 446.5,284 446.2,290 C446,295 444.5,299 442.5,302 C443,296 442.8,290 442,285 C441.5,281 441,277.5 440,274 Z"/>
</g>
</svg>
<svg width="960" height="540" style="left:0;top:0" fill="none" stroke="none"><rect x="8.5" y="4.2" width="11.5" height="10.6" fill="#0c1d2c" stroke="#2c8fd6" stroke-width="1"/><text x="10.2" y="12.3" font-size="6.3" font-weight="bold" fill="#4aa8f0" font-family="Liberation Sans">Ps</text><rect x="894.4" y="7.6" width="7.3" height="1.5" fill="#dcdcdc"/><rect x="913" y="5" width="6.6" height="4.8" stroke="#dcdcdc" stroke-width="1.5"/><path d="M938,4.5 L943.6,9.4 M943.6,4.5 L938,9.4" stroke="#dcdcdc" stroke-width="1.3"/><path d="M15.5,33 L21,27.7 L26.5,33 L24.5,33 L24.5,37.3 L22.3,37.3 L22.3,34.2 L19.7,34.2 L19.7,37.3 L17.5,37.3 L17.5,33 Z" fill="#dcdcdc"/><g transform="translate(46.6,32.7) scale(1.0)"><path d="M4.5,-5.2 L5.3,-4.5 L0.6,1.2 L-0.6,0.1 Z" fill="#dcdcdc"/><path d="M-1,0.6 L0.2,1.8 C-0.3,3.8 -2.3,5 -4.6,5.2 C-4.2,3.2 -3.2,1.2 -1,0.6 Z" fill="#dcdcdc"/></g><path d="M59.9,32.0 L62,35.0 L64.1,32.0" stroke="#bdbdbd" stroke-width="1.0"/><path d="M95.60000000000001,32.0 L97.7,35.0 L99.8,32.0" stroke="#bdbdbd" stroke-width="1.0"/><path d="M109,27 L114,27 L115.5,28.5 L120.6,28.5 L120.6,38.3 L109,38.3 Z" fill="#d8d8d8"/><g transform="translate(115,33) scale(0.85)"><path d="M4.5,-5.2 L5.3,-4.5 L0.6,1.2 L-0.6,0.1 Z" fill="#353535"/><path d="M-1,0.6 L0.2,1.8 C-0.3,3.8 -2.3,5 -4.6,5.2 C-4.2,3.2 -3.2,1.2 -1,0.6 Z" fill="#353535"/></g><path d="M232.8,31.799999999999997 L235,34.8 L237.2,31.799999999999997" stroke="#cfcfcf" stroke-width="1.0"/><path d="M308.3,31.5 L310.5,34.5 L312.7,31.5" stroke="#cfcfcf" stroke-width="1.1"/><path d="M394.8,31.5 L397,34.5 L399.2,31.5" stroke="#cfcfcf" stroke-width="1.1"/><path d="M488.8,31.5 L491,34.5 L493.2,31.5" stroke="#cfcfcf" stroke-width="1.1"/><path d="M331,28.8 A5.2,5.2 0 1 0 333.8,31.5" stroke="#dcdcdc" stroke-width="1.1"/><path d="M334.5,27 L328.5,33.5 L327.5,35 L329,34 L335.3,27.8 Z" fill="#dcdcdc"/><path d="M409,36 C410,31 414,29 418,31 M411,37.5 C413,34 416,34 418.5,35.5" stroke="#dcdcdc" stroke-width="1.1"/><path d="M421.2,27.5 L414.5,35.5 L413.5,37.5 L415.5,36.2 L421.8,28.3 Z" fill="#dcdcdc"/><polygon points="511.80,32.00 510.19,33.32 510.39,35.39 508.32,35.19 507.00,36.80 505.68,35.19 503.61,35.39 503.81,33.32 502.20,32.00 503.81,30.68 503.61,28.61 505.68,28.81 507.00,27.20 508.32,28.81 510.39,28.61 510.19,30.68" fill="#dcdcdc"/><circle cx="507" cy="32" r="1.68" fill="#535353"/><rect x="511" y="36.5" width="1.5" height="1.5" fill="#cfcfcf"/><circle cx="531" cy="33" r="5.3" stroke="#dcdcdc" stroke-width="1"/><circle cx="531" cy="33" r="2.8" stroke="#dcdcdc" stroke-width="1"/><path d="M538,27 L531.5,33.3 L532.6,34.3 L538.8,27.8 Z" fill="#dcdcdc"/><path d="M553,30 C551,27 547.5,27 547.8,29.5 C548,32 550,33 552,33 C549,34 548.5,37.5 550,38 C551.5,38.5 553,36 553,34 C553,36 554.5,38.5 556,38 C557.5,37.5 557,34 554,33 C556,33 558,32 558.3,29.5 C558.6,27 555,27 553,30 Z" stroke="#dcdcdc" stroke-width="1"/><circle cx="895.8" cy="32" r="3.6" stroke="#dcdcdc" stroke-width="1.3"/><path d="M898.4,34.6 L901.2,37.4" stroke="#dcdcdc" stroke-width="1.5"/><rect x="910.5" y="28.6" width="10.5" height="8.5" stroke="#dcdcdc" stroke-width="1"/><rect x="911.5" y="30" width="1.8" height="6" fill="#dcdcdc"/><path d="M928.3,31.5 L930.5,34.5 L932.7,31.5" stroke="#cfcfcf" stroke-width="1.1"/><path d="M942.5,31 L940.8,31 L940.8,37 L951.2,37 L951.2,31 L949.5,31" stroke="#dcdcdc" stroke-width="1.2"/><path d="M946,35 L946,27.5 M943.5,30 L946,27.3 L948.5,30" stroke="#dcdcdc" stroke-width="1.2"/><path d="M6.7,46.199999999999996 L9.1,47.8 L6.7,49.4" stroke="#b8b8b8" stroke-width="0.9"/><path d="M9.9,46.199999999999996 L12.299999999999999,47.8 L9.9,49.4" stroke="#b8b8b8" stroke-width="0.9"/><path d="M762.6,45.4 L760.1999999999999,47 L762.6,48.6" stroke="#b8b8b8" stroke-width="0.9"/><path d="M765.8000000000001,45.4 L763.4,47 L765.8000000000001,48.6" stroke="#b8b8b8" stroke-width="0.9"/><path d="M948.1999999999999,45.4 L950.6,47 L948.1999999999999,48.6" stroke="#b8b8b8" stroke-width="0.9"/><path d="M951.4,45.4 L953.8000000000001,47 L951.4,48.6" stroke="#b8b8b8" stroke-width="0.9"/><rect x="5.6" y="200" width="19.4" height="15" fill="#2d2d2d"/><rect x="22.3" y="75.6" width="1.2" height="1.2" fill="#bdbdbd"/><rect x="22.3" y="92.7" width="1.2" height="1.2" fill="#bdbdbd"/><rect x="22.3" y="109.8" width="1.2" height="1.2" fill="#bdbdbd"/><rect x="22.3" y="126.8" width="1.2" height="1.2" fill="#bdbdbd"/><rect x="22.3" y="144.0" width="1.2" height="1.2" fill="#bdbdbd"/><rect x="22.3" y="178.2" width="1.2" height="1.2" fill="#bdbdbd"/><rect x="22.3" y="195.3" width="1.2" height="1.2" fill="#bdbdbd"/><rect x="22.3" y="212.3" width="1.2" height="1.2" fill="#bdbdbd"/><rect x="22.3" y="229.4" width="1.2" height="1.2" fill="#bdbdbd"/><rect x="22.3" y="246.5" width="1.2" height="1.2" fill="#bdbdbd"/><rect x="22.3" y="263.6" width="1.2" height="1.2" fill="#bdbdbd"/><rect x="22.3" y="280.7" width="1.2" height="1.2" fill="#bdbdbd"/><rect x="22.3" y="297.8" width="1.2" height="1.2" fill="#bdbdbd"/><rect x="22.3" y="314.8" width="1.2" height="1.2" fill="#bdbdbd"/><rect x="22.3" y="331.9" width="1.2" height="1.2" fill="#bdbdbd"/><rect x="22.3" y="349.1" width="1.2" height="1.2" fill="#bdbdbd"/><rect x="22.3" y="366.2" width="1.2" height="1.2" fill="#bdbdbd"/><rect x="22.3" y="383.3" width="1.2" height="1.2" fill="#bdbdbd"/><rect x="22.3" y="400.4" width="1.2" height="1.2" fill="#bdbdbd"/><rect x="22.3" y="417.5" width="1.2" height="1.2" fill="#bdbdbd"/><rect x="22.3" y="435.7" width="1.2" height="1.2" fill="#bdbdbd"/><path d="M15.5,65.8 L15.5,75.8 M10.5,70.8 L20.5,70.8" stroke="#dcdcdc" stroke-width="1.2"/><path d="M13.5,67.8 L15.5,65.5 L17.5,67.8 Z M13.5,73.8 L15.5,76.1 L17.5,73.8 Z M12.5,68.8 L10.2,70.8 L12.5,72.8 Z M18.5,68.8 L20.8,70.8 L18.5,72.8 Z" fill="#dcdcdc"/><rect x="10.5" y="83.30000000000001" width="10" height="9.2" rx="1.5" stroke="#dcdcdc" stroke-width="1.2" stroke-dasharray="2.2 1.4"/><ellipse cx="16.0" cy="104" rx="5" ry="3.6" stroke="#dcdcdc" stroke-width="1.1"/><path d="M12.3,106.5 C11.0,108 12.5,109.5 13.5,110.5" stroke="#dcdcdc" stroke-width="1.1"/><path d="M14.0,117.5 C10.5,117.5 9.5,123 11.5,126 L14.5,126.5" stroke="#dcdcdc" stroke-width="1.1" stroke-dasharray="2 1.2"/><g transform="translate(17.0,122.2) scale(0.9)"><path d="M4.5,-5.2 L5.3,-4.5 L0.6,1.2 L-0.6,0.1 Z" fill="#dcdcdc"/><path d="M-1,0.6 L0.2,1.8 C-0.3,3.8 -2.3,5 -4.6,5.2 C-4.2,3.2 -3.2,1.2 -1,0.6 Z" fill="#dcdcdc"/></g><path d="M12.5,133.2 L12.5,142.2 L21.5,142.2 M9.5,136.2 L18.5,136.2 L18.5,145.2" stroke="#dcdcdc" stroke-width="1.3"/><rect x="10.5" y="151.3" width="10" height="10" stroke="#dcdcdc" stroke-width="1.1"/><path d="M10.5,151.3 L20.5,161.3 M20.5,151.3 L10.5,161.3" stroke="#dcdcdc" stroke-width="1.1"/><path d="M20.0,167.9 C21.5,169.4 20.5,170.9 19.0,171.9 L17.0,169.9 C18.0,168.4 19.0,166.9 20.0,167.9 Z" fill="#dcdcdc"/><path d="M18.0,172.4 L12.0,178.4 L10.5,178.9 L11.0,177.4 L17.0,171.4" stroke="#dcdcdc" stroke-width="1.1"/><path d="M15.5,169.4 L20.0,173.9" stroke="#dcdcdc" stroke-width="1.1"/><path d="M11.5,192.5 L17.5,186.5 L20.5,189.5 L14.5,195.5 Z" fill="#dcdcdc"/><path d="M12.5,189.5 C9.5,187.5 11.5,184.5 14.5,186.0" stroke="#dcdcdc" stroke-width="1"/><path d="M14.5,191.5 L16.5,189.5 M15.5,192.5 L17.5,190.5" stroke="#535353" stroke-width="0.6"/><g transform="translate(15.5,207.5) scale(1.05)"><path d="M4.5,-5.2 L5.3,-4.5 L0.6,1.2 L-0.6,0.1 Z" fill="#dcdcdc"/><path d="M-1,0.6 L0.2,1.8 C-0.3,3.8 -2.3,5 -4.6,5.2 C-4.2,3.2 -3.2,1.2 -1,0.6 Z" fill="#dcdcdc"/></g><circle cx="15.5" cy="222.1" r="2.5" fill="#dcdcdc"/><rect x="14.5" y="223.6" width="2" height="2.5" fill="#dcdcdc"/><path d="M10.5,226.1 L20.5,226.1 L20.5,228.6 L10.5,228.6 Z" fill="#dcdcdc"/><rect x="10.5" y="229.4" width="10" height="1" fill="#dcdcdc"/><g transform="translate(16.5,242.2) scale(1.0)"><path d="M4.5,-5.2 L5.3,-4.5 L0.6,1.2 L-0.6,0.1 Z" fill="#dcdcdc"/><path d="M-1,0.6 L0.2,1.8 C-0.3,3.8 -2.3,5 -4.6,5.2 C-4.2,3.2 -3.2,1.2 -1,0.6 Z" fill="#dcdcdc"/></g><path d="M10.5,239.7 C12.5,236.7 15.5,236.7 16.5,238.7" stroke="#dcdcdc" stroke-width="1"/><path d="M9.5,238.7 L11.0,240.7 L12.5,238.7" fill="#dcdcdc"/><path d="M10.5,260.8 L16.5,254.8 L20.5,258.8 L15.5,262.8 L12.5,262.8 Z" stroke="#dcdcdc" stroke-width="1.1"/><path d="M14.0,257.3 L18.0,261.3 L20.5,258.8 L16.5,254.8 Z" fill="#dcdcdc"/><path d="M15.5,263.3 L21.5,263.3" stroke="#dcdcdc" stroke-width="0.8"/><defs><linearGradient id="gr" x1="0" x2="1"><stop offset="0" stop-color="#2a2a2a"/><stop offset="1" stop-color="#e0e0e0"/></linearGradient></defs><rect x="10.0" y="271.4" width="11" height="9" fill="url(#gr)" stroke="#dcdcdc" stroke-width="1"/><path d="M15.5,287.5 C16.5,290 19.5,293 19.5,295 C19.5,297.5 17.5,298.5 15.5,298.5 C13.5,298.5 11.5,297.5 11.5,295 C11.5,293 14.5,290 15.5,287.5 Z" fill="#dcdcdc"/><circle cx="17.0" cy="308.5" r="3.8" fill="#dcdcdc"/><path d="M14.5,311 L10.5,315" stroke="#dcdcdc" stroke-width="1.3"/><path d="M10.5,332.1 L12.0,326.1 L17.5,322.1 L20.5,325.1 L16.5,330.6 Z" stroke="#dcdcdc" stroke-width="1.1"/><circle cx="15.0" cy="327.6" r="1" fill="#dcdcdc"/><path d="M10.5,341.3 L10.5,339.3 L20.5,339.3 L20.5,341.3 M15.5,339.3 L15.5,349.3 M13.0,349.3 L18.0,349.3" stroke="#dcdcdc" stroke-width="1.3"/><path d="M12.0,355.9 L12.0,365.4 L14.5,362.9 L16.5,366.9 L18.0,366.2 L16.0,362.4 L19.5,362.4 Z" fill="#1e1e1e" stroke="#dcdcdc" stroke-width="1"/><rect x="10.0" y="374.5" width="11" height="8" fill="#6a6a6a" stroke="#dcdcdc" stroke-width="1.1"/><path d="M12.5,400.6 C11.5,398.6 9.5,396.6 10.0,395.6 C10.5,394.6 12.0,395.6 12.5,396.6 L12.5,391.6 C12.5,390.6 14.0,390.6 14.0,391.6 L14.0,390.6 C14.0,389.6 15.5,389.6 15.5,390.6 L15.5,391.1 C15.5,390.1 17.0,390.1 17.0,391.1 L17.0,392.6 C17.0,391.6 18.5,391.6 18.5,392.6 L18.5,397.6 C18.5,399.6 17.5,400.6 16.5,401.1 Z" fill="#dcdcdc"/><circle cx="14.7" cy="411.2" r="4.2" stroke="#dcdcdc" stroke-width="1.1"/><path d="M17.7,414.2 L20.8,417.7" stroke="#dcdcdc" stroke-width="1.5"/><circle cx="11.5" cy="430.9" r="1.2" fill="#dcdcdc"/><circle cx="15.5" cy="430.9" r="1.2" fill="#dcdcdc"/><circle cx="19.5" cy="430.9" r="1.2" fill="#dcdcdc"/><rect x="6.5" y="443.8" width="4" height="4" fill="#1a1a1a" stroke="#dcdcdc" stroke-width="0.8"/><rect x="9" y="446.5" width="3" height="3" fill="#eeeeee"/><path d="M18,447 L18,444.3 L21,444.3 M21.5,446 L21.5,449 L18.5,449" stroke="#dcdcdc" stroke-width="0.9"/><rect x="12.6" y="459.7" width="11.8" height="12.6" fill="#ffffff"/><rect x="6.5" y="454.2" width="10" height="9.6" fill="#535353" stroke="#d4d4d4" stroke-width="1.3"/><rect x="10" y="480.3" width="10.4" height="8.6" stroke="#dcdcdc" stroke-width="1"/><circle cx="15.2" cy="484.6" r="2" fill="#8a8a8a"/><rect x="10" y="499.5" width="6.5" height="5.5" stroke="#dcdcdc" stroke-width="0.9"/><rect x="13.5" y="497" width="7" height="5.5" fill="#535353" stroke="#dcdcdc" stroke-width="0.9"/><rect x="22" y="506" width="1" height="1" fill="#bdbdbd"/><path d="M175.2,425.8 L177,428.3 L175.2,430.8" stroke="#cfcfcf" stroke-width="0.9"/><path d="M189.5,425.8 L187.7,428.3 L189.5,430.8" stroke="#9a9a9a" stroke-width="0.9"/><path d="M735,70.5 L737.5,68 L740,70.5" stroke="#9a9a9a" stroke-width="0.9"/><path d="M735,416 L737.5,418.5 L740,416" stroke="#9a9a9a" stroke-width="0.9"/><path d="M724.5,425.8 L726.3,428.3 L724.5,430.8" stroke="#9a9a9a" stroke-width="0.9"/><rect x="35.5" y="464" width="1.2" height="6" fill="#a2a2a2"/><path d="M41.5,464 L37.5,467 L41.5,470 Z" fill="#a2a2a2"/><path d="M60,464 L56,467 L60,470 Z" fill="#a2a2a2"/><rect x="61" y="464" width="1.2" height="6" fill="#a2a2a2"/><path d="M77.5,463.5 L82.5,467 L77.5,470.5 Z" fill="#a2a2a2"/><rect x="97.5" y="464" width="1.2" height="6" fill="#a2a2a2"/><path d="M99.5,464 L103.5,467 L99.5,470 Z" fill="#a2a2a2"/><path d="M121,463.5 L117,467 L121,470.5 Z" fill="#a2a2a2"/><polygon points="144.00,467.00 142.73,468.05 142.89,469.69 141.25,469.53 140.20,470.80 139.15,469.53 137.51,469.69 137.67,468.05 136.40,467.00 137.67,465.95 137.51,464.31 139.15,464.47 140.20,463.20 141.25,464.47 142.89,464.31 142.73,465.95" fill="#a2a2a2"/><circle cx="140.2" cy="467" r="1.33" fill="#535353"/><circle cx="162" cy="469.5" r="1.7" stroke="#a2a2a2" stroke-width="1"/><circle cx="162" cy="464.5" r="1.7" stroke="#a2a2a2" stroke-width="1"/><path d="M163.5,468.5 L171,463.5 M163.5,465.5 L171,470.5" stroke="#a2a2a2" stroke-width="1"/><rect x="182" y="462.5" width="9" height="9" stroke="#a2a2a2" stroke-width="1"/><path d="M182,471.5 L191,462.5 L191,471.5 Z" fill="#a2a2a2"/><rect x="33" y="530" width="3.5" height="3.5" stroke="#9a9a9a" stroke-width="0.8"/><rect x="37.5" y="530" width="3.5" height="3.5" stroke="#9a9a9a" stroke-width="0.8"/><rect x="42" y="530" width="3.5" height="3.5" stroke="#9a9a9a" stroke-width="0.8"/><path d="M53.5,535 C54,531 57,530 60,530 L60,528 L63,531 L60,534 L60,532 C57.5,532 55.5,533 53.5,535 Z" fill="#a8a8a8"/><path d="M209,533.5 L212,531 L213.5,532 L215,531 L217.5,533.5 Z" fill="#bdbdbd"/><rect x="226.4" y="528.5" width="56.3" height="1.2" fill="#9a9a9a"/><path d="M290.5,534.5 L295,529.5 L297,531 L299,529 L303,534.5 Z" fill="#bdbdbd"/><rect x="732" y="442" width="7" height="5.5" fill="#8c8c8c"/><path d="M732,443.8 L739,443.8 M732,445.6 L739,445.6" stroke="#6a6a6a" stroke-width="0.5"/><path d="M435.7,501.0 L438.5,504.0 L441.3,501.0" stroke="#d0d0d0" stroke-width="1.0"/><path d="M201.5,50.8 L206.5,55.8 M206.5,50.8 L201.5,55.8" stroke="#a8a8a8" stroke-width="0.9"/><rect x="947" y="57.8" width="7" height="5.5" fill="#8c8c8c"/><path d="M947,59.599999999999994 L954,59.599999999999994 M947,61.4 L954,61.4" stroke="#6a6a6a" stroke-width="0.5"/><rect x="947" y="221.5" width="7" height="5.5" fill="#8c8c8c"/><path d="M947,223.3 L954,223.3 M947,225.1 L954,225.1" stroke="#6a6a6a" stroke-width="0.5"/><rect x="744" y="51" width="25" height="489" fill="#3b3b3b"/><rect x="744" y="51.5" width="25" height="26.5" fill="#535353"/><rect x="744" y="80" width="25" height="42.5" fill="#535353"/><rect x="750" y="81.2" width="13" height="0.7" fill="#5e5e5e"/><rect x="744" y="124.5" width="25" height="25.8" fill="#535353"/><rect x="750" y="125.7" width="13" height="0.7" fill="#5e5e5e"/><rect x="744" y="152.3" width="25" height="43.2" fill="#535353"/><rect x="750" y="153.5" width="13" height="0.7" fill="#5e5e5e"/><rect x="744" y="197.5" width="25" height="25.5" fill="#535353"/><rect x="750" y="198.7" width="13" height="0.7" fill="#5e5e5e"/><rect x="744" y="225" width="25" height="42.3" fill="#535353"/><rect x="750" y="226.2" width="13" height="0.7" fill="#5e5e5e"/><rect x="744" y="269.3" width="25" height="45.2" fill="#535353"/><rect x="750" y="270.5" width="13" height="0.7" fill="#5e5e5e"/><rect x="744" y="316.5" width="25" height="42.5" fill="#535353"/><rect x="750" y="317.7" width="13" height="0.7" fill="#5e5e5e"/><rect x="744" y="361" width="25" height="25.0" fill="#535353"/><rect x="750" y="362.2" width="13" height="0.7" fill="#5e5e5e"/><rect x="744" y="388" width="25" height="152.0" fill="#535353"/><rect x="752.2" y="61.8" width="2.6" height="2.6" stroke="#dedede" stroke-width="0.9"/><rect x="752.2" y="65.4" width="2.6" height="2.6" stroke="#dedede" stroke-width="0.9"/><rect x="751.7" y="68.7" width="3.6" height="3.6" fill="#dedede"/><path d="M758,63.5 C761.5,64 762,69.5 757.5,72" stroke="#dedede" stroke-width="1.3"/><path d="M756.5,62 L759.5,62.2 L758,65.2 Z" fill="#dedede"/><circle cx="757" cy="93.5" r="2.9" stroke="#dedede" stroke-width="1.3"/><circle cx="757" cy="93.5" r="1" fill="#dedede"/><path d="M758.00,93.50 L763.20,93.50" stroke="#dedede" stroke-width="1.2"/><path d="M757.71,94.21 L761.38,97.88" stroke="#dedede" stroke-width="1.2"/><path d="M757.00,94.50 L757.00,99.70" stroke="#dedede" stroke-width="1.2"/><path d="M756.29,94.21 L752.62,97.88" stroke="#dedede" stroke-width="1.2"/><path d="M756.00,93.50 L750.80,93.50" stroke="#dedede" stroke-width="1.2"/><path d="M756.29,92.79 L752.62,89.12" stroke="#dedede" stroke-width="1.2"/><path d="M757.00,92.50 L757.00,87.30" stroke="#dedede" stroke-width="1.2"/><path d="M757.71,92.79 L761.38,89.12" stroke="#dedede" stroke-width="1.2"/><path d="M751,116.5 L751,114.0 L752.5,112.5 L753.5,114.0 L755,110.5 L756.5,113.5 L758,109.5 L759.5,113.5 L761,111.0 L763,114.0 L763,116.5 Z" fill="#dedede"/><circle cx="757" cy="139.5" r="5" stroke="#dedede" stroke-width="1.1"/><rect x="756.4" y="138.5" width="1.3" height="4" fill="#dedede"/><circle cx="757" cy="136.7" r="0.8" fill="#dedede"/><path d="M751,162 L752,162 M751,164 L752,164 M751,166 L752,166 M753,162 L756,162 M753,164 L755,164 M753,166 L755,166" stroke="#dedede" stroke-width="0.9"/><g transform="translate(758.5,168) scale(1.0)"><path d="M4.5,-5.2 L5.3,-4.5 L0.6,1.2 L-0.6,0.1 Z" fill="#dedede"/><path d="M-1,0.6 L0.2,1.8 C-0.3,3.8 -2.3,5 -4.6,5.2 C-4.2,3.2 -3.2,1.2 -1,0.6 Z" fill="#dedede"/></g><path d="M752,183.0 L762,183.0" stroke="#dedede" stroke-width="1.1"/><circle cx="753.5" cy="183.0" r="1.4" fill="#dedede"/><path d="M752,188.0 L760,188.0" stroke="#dedede" stroke-width="1.1"/><path d="M759,188.0 L762.5,185.5 L762.5,190.5 Z" fill="#dedede"/><path d="M751,208 L752,208 M751,210 L752,210 M751,212 L752,212 M753,208 L755,208 M753,210 L755,210 M753,212 L755,212" stroke="#dedede" stroke-width="0.9"/><circle cx="759" cy="210.5" r="2.2" fill="#dedede"/><rect x="758.2" y="212" width="1.6" height="2" fill="#dedede"/><rect x="754" y="214" width="10" height="2.8" fill="#dedede"/><rect x="754" y="217.4" width="10" height="0.9" fill="#dedede"/><text x="751" y="244" font-size="12" fill="#dedede" font-family="Liberation Sans">A</text><rect x="760.5" y="233" width="0.9" height="12" fill="#dedede"/><text x="753" y="261" font-size="11" font-weight="bold" fill="#dedede" font-family="Liberation Sans">¶</text><text x="756" y="290" font-size="10.5" font-weight="bold" fill="#dedede" font-family="Liberation Sans">¶</text><rect x="751" y="285" width="4" height="4" fill="#535353" stroke="#dedede" stroke-width="0.9"/><rect x="753" y="287" width="4" height="4" fill="#dedede"/><text x="755" y="307.5" font-size="11" fill="#dedede" font-family="Liberation Sans">A</text><rect x="751" y="302.5" width="4" height="4" fill="#535353" stroke="#dedede" stroke-width="0.9"/><rect x="753" y="304.5" width="4" height="4" fill="#dedede"/><rect x="752" y="324.6" width="10" height="10" stroke="#dedede" stroke-width="1.1"/><rect x="754" y="326.6" width="3" height="3" fill="#dedede"/><path d="M758,327.1 L760,327.1 M754,331.6 L760,331.6" stroke="#dedede" stroke-width="0.9"/><path d="M752,342.5 L762,342.5 L762,350 L758.5,353.5 L752,353.5 Z" fill="#dedede"/><path d="M754,345 L760,345 M754,347 L760,347 M754,349 L758,349" stroke="#535353" stroke-width="0.8"/><path d="M758.5,353.5 L758.5,350 L762,350" stroke="#535353" stroke-width="0.8"/><path d="M752.5,370.1 L762,379.6" stroke="#dedede" stroke-width="1.5"/><path d="M750.8,371.40000000000003 A2.6,2.6 0 1 1 753.8,368.40000000000003 L753,370.6 Z" fill="#dedede"/><circle cx="762" cy="379.6" r="1.6" fill="#dedede"/><path d="M763,368.6 L756,375.6" stroke="#dedede" stroke-width="1.1"/><path d="M757,374.6 L751.5,380.1" stroke="#dedede" stroke-width="3" stroke-linecap="round"/><rect x="778" y="74.5" width="13.5" height="13.2" fill="#393939"/><rect x="780.3" y="77" width="9" height="8" stroke="#e0e0e0" stroke-width="1"/><path d="M780.8,84.5 L783.5,80.5 L785.5,82.5 L786.8,81 L788.8,84.5 Z" fill="#e0e0e0"/><circle cx="836" cy="106" r="2.2" stroke="#dcdcdc" stroke-width="1"/><circle cx="841" cy="106" r="2.2" stroke="#dcdcdc" stroke-width="1"/><path d="M836,106 L841,106" stroke="#dcdcdc" stroke-width="1"/><circle cx="778.8" cy="244.5" r="2.3" stroke="#d8d8d8" stroke-width="1.1"/><path d="M780.4,246.1 L782.6,248.3" stroke="#d8d8d8" stroke-width="1.3"/><path d="M834.3,243.5 L836.5,246.5 L838.7,243.5" stroke="#cfcfcf" stroke-width="1.1"/><g transform="translate(2.5,0)"><rect x="851.5" y="240.5" width="11" height="8" stroke="#d8d8d8" stroke-width="1"/><path d="M852.5,247.5 L855,244 L857,246 L858.5,244.5 L861.5,247.5 Z" fill="#d8d8d8"/></g><circle cx="874.6" cy="244.5" r="4.2" fill="#d8d8d8"/><path d="M871.6,247.5 A4.2,4.2 0 0 0 877.6,241.5 Z" fill="#535353"/><circle cx="874.6" cy="244.5" r="4.2" stroke="#d8d8d8" stroke-width="0.8"/><path d="M886.5,242 L886.5,240.2 L895.5,240.2 L895.5,242 M891,240.2 L891,249 M889,249 L893,249" stroke="#d8d8d8" stroke-width="1.2"/><rect x="902.5" y="241" width="7.5" height="7.5" stroke="#d8d8d8" stroke-width="1"/><rect x="901.5" y="240" width="2" height="2" fill="#d8d8d8"/><rect x="909" y="240" width="2" height="2" fill="#d8d8d8"/><rect x="901.5" y="247.5" width="2" height="2" fill="#d8d8d8"/><rect x="909" y="247.5" width="2" height="2" fill="#d8d8d8"/><path d="M919.5,242.5 L923.5,240 L926.5,242.5 L926.5,249 L919.5,249 Z" fill="#d8d8d8"/><rect x="919" y="245" width="4" height="4" fill="#535353" stroke="#d8d8d8" stroke-width="0.8"/><rect x="940.5" y="243" width="5" height="8" rx="2.5" fill="#3a3a3a"/><circle cx="943" cy="242" r="2.6" fill="#e6e6e6"/><path d="M868.8,262.0 L871,265.0 L873.2,262.0" stroke="#cfcfcf" stroke-width="1.1"/><path d="M937.3,262.0 L939.5,265.0 L941.7,262.0" stroke="#cfcfcf" stroke-width="1.1"/><path d="M937.3,281.0 L939.5,284.0 L941.7,281.0" stroke="#cfcfcf" stroke-width="1.1"/><g transform="translate(-23,0)"><rect x="826.5" y="277.5" width="9" height="9" stroke="#d8d8d8" stroke-width="1"/><rect x="827.5" y="278.5" width="2.3" height="2.3" fill="#d8d8d8"/><rect x="832.2" y="278.5" width="2.3" height="2.3" fill="#d8d8d8"/><rect x="829.8" y="280.8" width="2.4" height="2.4" fill="#d8d8d8"/><rect x="827.5" y="283.2" width="2.3" height="2.3" fill="#d8d8d8"/><rect x="832.2" y="283.2" width="2.3" height="2.3" fill="#d8d8d8"/><g transform="translate(846,282) scale(1.0)"><path d="M4.5,-5.2 L5.3,-4.5 L0.6,1.2 L-0.6,0.1 Z" fill="#d8d8d8"/><path d="M-1,0.6 L0.2,1.8 C-0.3,3.8 -2.3,5 -4.6,5.2 C-4.2,3.2 -3.2,1.2 -1,0.6 Z" fill="#d8d8d8"/></g></g><g transform="translate(-26,0)"><path d="M862,277 L862,287 M857,282 L867,282" stroke="#d8d8d8" stroke-width="1.1"/><path d="M860.3,278.8 L862,276.7 L863.7,278.8 Z M860.3,285.2 L862,287.3 L863.7,285.2 Z M858.8,280.3 L856.7,282 L858.8,283.7 Z M865.2,280.3 L867.3,282 L865.2,283.7 Z" fill="#d8d8d8"/><rect x="873.5" y="279" width="7.5" height="7" stroke="#d8d8d8" stroke-width="1"/><path d="M873.5,276.5 L873.5,279 M871.5,279 L873.5,279 M881,286 L883,286 M881,286 L881,288" stroke="#d8d8d8" stroke-width="1"/><path d="M879.5,276.5 L882.5,276.5 L882.5,279.5" stroke="#d8d8d8" stroke-width="0.8"/><path d="M888.7,281 L888.7,279.2 A2.3,2.3 0 0 1 893.3,279.2 L893.3,281" stroke="#d8d8d8" stroke-width="1.1"/><rect x="887.5" y="281" width="7" height="5.5" fill="#d8d8d8"/></g><rect x="792.2" y="295.2" width="22" height="16.8" fill="#ffffff" stroke="#2a2a2a" stroke-width="1.2"/><circle cx="802.8" cy="303.7" r="2.1" stroke="#555" stroke-width="0.9"/><circle cx="802.8" cy="303.7" r="0.9" fill="#222"/><rect x="805.5" y="302.0" width="8.9" height="10" fill="#2a2a2a"/><rect x="807" y="303.5" width="3" height="3" fill="#e0e0e0"/><rect x="810.5" y="305.5" width="2.5" height="2.5" fill="#e0e0e0"/><rect x="806.8" y="307.7" width="3" height="3" fill="#e0e0e0"/><rect x="792.2" y="317.6" width="22" height="16.8" fill="#ffffff" stroke="#2a2a2a" stroke-width="1.2"/><circle cx="802.8" cy="326.1" r="2.1" stroke="#555" stroke-width="0.9"/><circle cx="802.8" cy="326.1" r="0.9" fill="#222"/><rect x="805.5" y="324.4" width="8.9" height="10" fill="#2a2a2a"/><rect x="807" y="325.9" width="3" height="3" fill="#e0e0e0"/><rect x="810.5" y="327.9" width="2.5" height="2.5" fill="#e0e0e0"/><rect x="806.8" y="330.1" width="3" height="3" fill="#e0e0e0"/><rect x="792.2" y="340.0" width="22" height="16.8" fill="#ffffff" stroke="#2a2a2a" stroke-width="1.2"/><circle cx="802.8" cy="348.5" r="2.1" stroke="#555" stroke-width="0.9"/><circle cx="802.8" cy="348.5" r="0.9" fill="#222"/><rect x="805.5" y="346.8" width="8.9" height="10" fill="#2a2a2a"/><rect x="807" y="348.3" width="3" height="3" fill="#e0e0e0"/><rect x="810.5" y="350.3" width="2.5" height="2.5" fill="#e0e0e0"/><rect x="806.8" y="352.5" width="3" height="3" fill="#e0e0e0"/><rect x="792.2" y="362.4" width="22" height="16.8" fill="#ffffff" stroke="#2a2a2a" stroke-width="1.2"/><circle cx="802.8" cy="370.9" r="2.1" stroke="#555" stroke-width="0.9"/><circle cx="802.8" cy="370.9" r="0.9" fill="#222"/><rect x="805.5" y="369.2" width="8.9" height="10" fill="#2a2a2a"/><rect x="807" y="370.7" width="3" height="3" fill="#e0e0e0"/><rect x="810.5" y="372.7" width="2.5" height="2.5" fill="#e0e0e0"/><rect x="806.8" y="374.9" width="3" height="3" fill="#e0e0e0"/><rect x="792.2" y="384.8" width="22" height="16.8" fill="#ffffff" stroke="#2a2a2a" stroke-width="1.2"/><circle cx="802.8" cy="393.3" r="2.1" stroke="#555" stroke-width="0.9"/><circle cx="802.8" cy="393.3" r="0.9" fill="#222"/><rect x="805.5" y="391.6" width="8.9" height="10" fill="#2a2a2a"/><rect x="807" y="393.1" width="3" height="3" fill="#e0e0e0"/><rect x="810.5" y="395.1" width="2.5" height="2.5" fill="#e0e0e0"/><rect x="806.8" y="397.3" width="3" height="3" fill="#e0e0e0"/><rect x="792.2" y="407.2" width="22" height="16.8" fill="#ffffff" stroke="#2a2a2a" stroke-width="1.2"/><circle cx="802.8" cy="415.7" r="2.1" stroke="#555" stroke-width="0.9"/><circle cx="802.8" cy="415.7" r="0.9" fill="#222"/><rect x="805.5" y="414.0" width="8.9" height="10" fill="#2a2a2a"/><rect x="807" y="415.5" width="3" height="3" fill="#e0e0e0"/><rect x="810.5" y="417.5" width="2.5" height="2.5" fill="#e0e0e0"/><rect x="806.8" y="419.7" width="3" height="3" fill="#e0e0e0"/><rect x="792.2" y="429.6" width="22" height="16.8" fill="#ffffff" stroke="#2a2a2a" stroke-width="1.2"/><circle cx="802.8" cy="438.1" r="2.1" stroke="#555" stroke-width="0.9"/><circle cx="802.8" cy="438.1" r="0.9" fill="#222"/><rect x="805.5" y="436.4" width="8.9" height="10" fill="#2a2a2a"/><rect x="807" y="437.9" width="3" height="3" fill="#e0e0e0"/><rect x="810.5" y="439.9" width="2.5" height="2.5" fill="#e0e0e0"/><rect x="806.8" y="442.1" width="3" height="3" fill="#e0e0e0"/><rect x="792.2" y="452.0" width="22" height="16.8" fill="#ffffff" stroke="#2a2a2a" stroke-width="1.2"/><circle cx="802.8" cy="460.5" r="2.1" stroke="#555" stroke-width="0.9"/><circle cx="802.8" cy="460.5" r="0.9" fill="#222"/><rect x="805.5" y="458.8" width="8.9" height="10" fill="#2a2a2a"/><rect x="807" y="460.3" width="3" height="3" fill="#e0e0e0"/><rect x="810.5" y="462.3" width="2.5" height="2.5" fill="#e0e0e0"/><rect x="806.8" y="464.5" width="3" height="3" fill="#e0e0e0"/><rect x="792.2" y="474.4" width="22" height="16.8" fill="#ffffff" stroke="#2a2a2a" stroke-width="1.2"/><circle cx="802.8" cy="482.9" r="2.1" stroke="#555" stroke-width="0.9"/><circle cx="802.8" cy="482.9" r="0.9" fill="#222"/><rect x="805.5" y="481.2" width="8.9" height="10" fill="#2a2a2a"/><rect x="807" y="482.7" width="3" height="3" fill="#e0e0e0"/><rect x="810.5" y="484.7" width="2.5" height="2.5" fill="#e0e0e0"/><rect x="806.8" y="486.9" width="3" height="3" fill="#e0e0e0"/><rect x="792.2" y="496.8" width="22" height="16.8" fill="#ffffff" stroke="#2a2a2a" stroke-width="1.2"/><circle cx="802.8" cy="505.3" r="2.1" stroke="#555" stroke-width="0.9"/><circle cx="802.8" cy="505.3" r="0.9" fill="#222"/><path d="M791.2,500.8 L791.2,495.7 L797,495.7 M810,495.7 L815.8,495.7 L815.8,500.8 M815.8,509.8 L815.8,514.9 L810,514.9 M797,514.9 L791.2,514.9 L791.2,509.8" stroke="#e8e8e8" stroke-width="1"/><path d="M776,303.7 C778,300.2 782,300.2 784.3,303.7 C782,307.2 778,307.2 776,303.7 Z" fill="#e0e0e0"/><circle cx="780.2" cy="303.7" r="1.5" fill="#3a3a3a"/><path d="M776,326.1 C778,322.6 782,322.6 784.3,326.1 C782,329.6 778,329.6 776,326.1 Z" fill="#e0e0e0"/><circle cx="780.2" cy="326.1" r="1.5" fill="#3a3a3a"/><path d="M776,348.5 C778,345.0 782,345.0 784.3,348.5 C782,352.0 778,352.0 776,348.5 Z" fill="#e0e0e0"/><circle cx="780.2" cy="348.5" r="1.5" fill="#3a3a3a"/><path d="M776,370.9 C778,367.4 782,367.4 784.3,370.9 C782,374.4 778,374.4 776,370.9 Z" fill="#e0e0e0"/><circle cx="780.2" cy="370.9" r="1.5" fill="#3a3a3a"/><path d="M776,393.3 C778,389.8 782,389.8 784.3,393.3 C782,396.8 778,396.8 776,393.3 Z" fill="#e0e0e0"/><circle cx="780.2" cy="393.3" r="1.5" fill="#3a3a3a"/><path d="M776,415.7 C778,412.2 782,412.2 784.3,415.7 C782,419.2 778,419.2 776,415.7 Z" fill="#e0e0e0"/><circle cx="780.2" cy="415.7" r="1.5" fill="#3a3a3a"/><path d="M776,438.1 C778,434.6 782,434.6 784.3,438.1 C782,441.6 778,441.6 776,438.1 Z" fill="#e0e0e0"/><circle cx="780.2" cy="438.1" r="1.5" fill="#3a3a3a"/><path d="M776,460.5 C778,457.0 782,457.0 784.3,460.5 C782,464.0 778,464.0 776,460.5 Z" fill="#e0e0e0"/><circle cx="780.2" cy="460.5" r="1.5" fill="#3a3a3a"/><path d="M776,482.9 C778,479.4 782,479.4 784.3,482.9 C782,486.4 778,486.4 776,482.9 Z" fill="#e0e0e0"/><circle cx="780.2" cy="482.9" r="1.5" fill="#3a3a3a"/><path d="M776,505.3 C778,501.8 782,501.8 784.3,505.3 C782,508.8 778,508.8 776,505.3 Z" fill="#e0e0e0"/><circle cx="780.2" cy="505.3" r="1.5" fill="#3a3a3a"/><path d="M827,528.2 L825.5,528.2 A2,2 0 0 0 825.5,532.2 L827.5,532.2 M829,528.2 L830.5,528.2 A2,2 0 0 1 830.5,532.2 L828.5,532.2 M826,530.2 L830,530.2" stroke="#8a8a8a" stroke-width="1"/><text x="841" y="533.7" font-size="10" font-style="italic" fill="#c8c8c8" font-family="Liberation Serif">fx</text><rect x="849.5" y="533.2" width="1.2" height="1.2" fill="#c8c8c8"/><rect x="859.5" y="526.2" width="10" height="8" fill="#c8c8c8"/><circle cx="864.5" cy="530.2" r="2.5" fill="#535353"/><circle cx="881.5" cy="530.2" r="4.2" fill="#c8c8c8"/><path d="M878.5,533.2 A4.2,4.2 0 0 0 884.5,527.2 Z" fill="#535353"/><circle cx="881.5" cy="530.2" r="4.2" stroke="#c8c8c8" stroke-width="0.8"/><rect x="885" y="533.7" width="1.2" height="1.2" fill="#c8c8c8"/><path d="M894,526.7 L897.5,526.7 L898.5,527.7 L904,527.7 L904,534.2 L894,534.2 Z" fill="#c8c8c8"/><path d="M894,528.9000000000001 L904,528.9000000000001" stroke="#535353" stroke-width="0.6"/><path d="M913,526.2 L921,526.2 L921,534.2 L916,534.2 L913,531.2 Z" stroke="#c8c8c8" stroke-width="1.1"/><path d="M913,531.2 L916,531.2 L916,534.2" stroke="#c8c8c8" stroke-width="1"/><path d="M931,527.2 L939,527.2 M933,527.2 L933,525.7 L937,525.7 L937,527.2" stroke="#c8c8c8" stroke-width="1"/><path d="M931.8,528.2 L938.2,528.2 L937.5,534.7 L932.5,534.7 Z" fill="#c8c8c8"/><path d="M934,529.2 L934,533.7 M936,529.2 L936,533.7" stroke="#535353" stroke-width="0.6"/></svg>
</body></html>
